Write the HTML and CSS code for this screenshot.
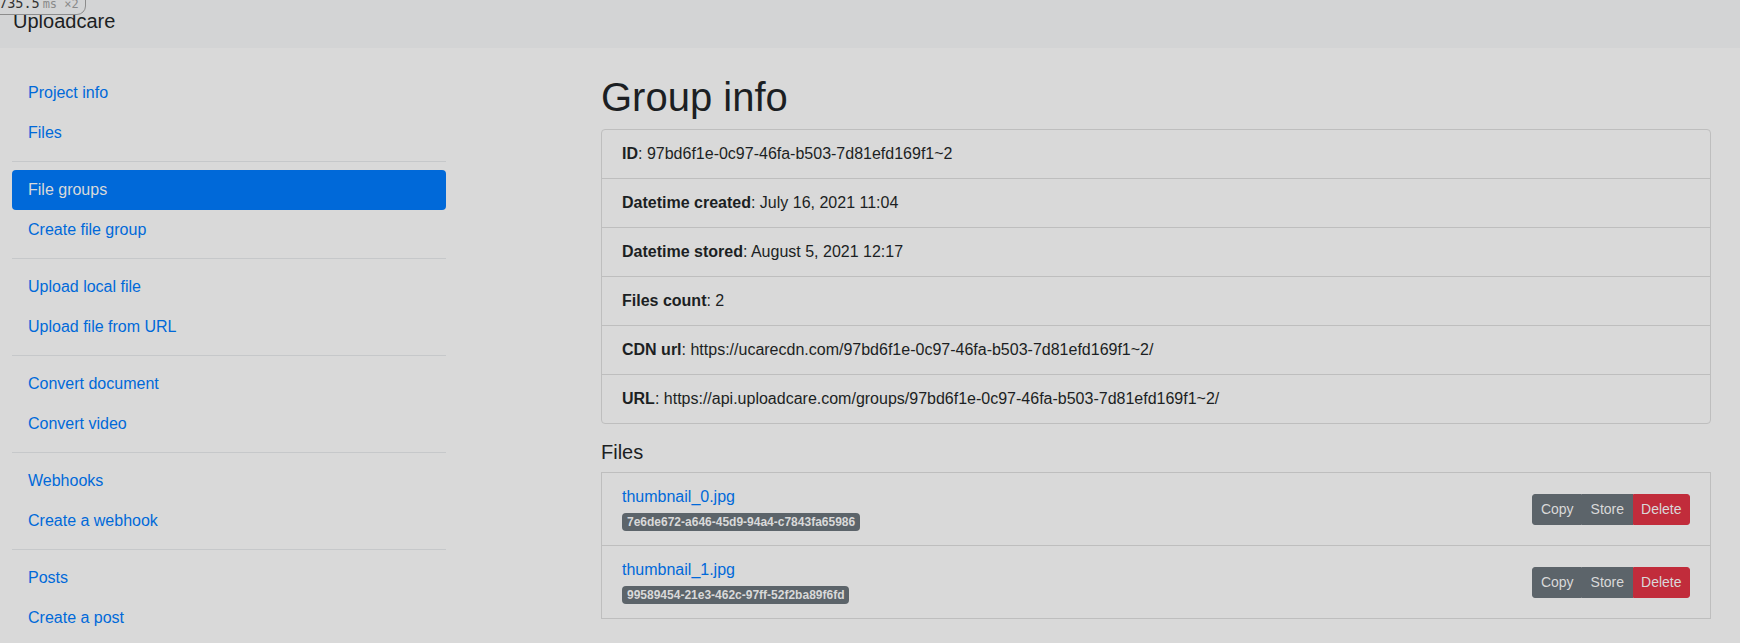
FILE: index.html
```html
<!DOCTYPE html>
<html lang="en">
<head>
<meta charset="utf-8">
<title>Group info</title>
<link rel="stylesheet" href="styles.css">
</head>
<body>
<div class="perf"><span class="perf-num">735.5</span><span class="perf-unit">ms ×2</span></div>
<header class="topbar"><span class="brand">Uploadcare</span></header>
<div class="layout">
  <nav class="sidebar">
    <a class="nav-link" href="#">Project info</a>
    <a class="nav-link" href="#">Files</a>
    <div class="divider"></div>
    <a class="nav-link active" href="#">File groups</a>
    <a class="nav-link" href="#">Create file group</a>
    <div class="divider"></div>
    <a class="nav-link" href="#">Upload local file</a>
    <a class="nav-link" href="#">Upload file from URL</a>
    <div class="divider"></div>
    <a class="nav-link" href="#">Convert document</a>
    <a class="nav-link" href="#">Convert video</a>
    <div class="divider"></div>
    <a class="nav-link" href="#">Webhooks</a>
    <a class="nav-link" href="#">Create a webhook</a>
    <div class="divider"></div>
    <a class="nav-link" href="#">Posts</a>
    <a class="nav-link" href="#">Create a post</a>
  </nav>
  <main class="main">
    <h1 class="title">Group info</h1>
    <ul class="info-list">
      <li class="info-item"><b>ID</b>: 97bd6f1e-0c97-46fa-b503-7d81efd169f1~2</li>
      <li class="info-item"><b>Datetime created</b>: July 16, 2021 11:04</li>
      <li class="info-item"><b>Datetime stored</b>: August 5, 2021 12:17</li>
      <li class="info-item"><b>Files count</b>: 2</li>
      <li class="info-item"><b>CDN url</b>: https://ucarecdn.com/97bd6f1e-0c97-46fa-b503-7d81efd169f1~2/</li>
      <li class="info-item"><b>URL</b>: https://api.uploadcare.com/groups/97bd6f1e-0c97-46fa-b503-7d81efd169f1~2/</li>
    </ul>
    <h5 class="subtitle">Files</h5>
    <ul class="file-list">
      <li class="file-item">
        <div class="file-meta">
          <a class="file-name" href="#">thumbnail_0.jpg</a>
          <div class="file-id"><span class="badge">7e6de672-a646-45d9-94a4-c7843fa65986</span></div>
        </div>
        <div class="btn-group">
          <button class="btn btn-gray">Copy</button><button class="btn btn-gray">Store</button><button class="btn btn-red">Delete</button>
        </div>
      </li>
      <li class="file-item">
        <div class="file-meta">
          <a class="file-name" href="#">thumbnail_1.jpg</a>
          <div class="file-id"><span class="badge">99589454-21e3-462c-97ff-52f2ba89f6fd</span></div>
        </div>
        <div class="btn-group">
          <button class="btn btn-gray">Copy</button><button class="btn btn-gray">Store</button><button class="btn btn-red">Delete</button>
        </div>
      </li>
    </ul>
  </main>
</div>
</body>
</html>
```

FILE: styles.css
```css
* { box-sizing: border-box; }
html, body { margin: 0; padding: 0; }
body {
  background: #d9d9d9;
  color: #1c1f23;
  font-family: "Liberation Sans", Arial, sans-serif;
  font-size: 16px;
  line-height: 24px;
  width: 1740px;
  height: 643px;
  overflow: hidden;
  position: relative;
}
a { text-decoration: none; color: #0069d9; }

.perf {
  position: absolute;
  top: -6px;
  left: -8px;
  padding: 0 6px 2px 6px;
  border: 1px solid #8c8c8c;
  border-radius: 0 0 9px 0;
  background: #d3d4d5;
  font-family: "DejaVu Sans Mono", monospace;
  line-height: 16px;
  white-space: nowrap;
  z-index: 5;
}
.perf-num { font-size: 13.5px; color: #333; }
.perf-unit { font-size: 12px; color: #8a8a8a; margin-left: 3px; }

.topbar {
  height: 48px;
  background: #d3d4d5;
  padding: 6px 13px 0;
}
.brand {
  font-size: 20px;
  line-height: 30px;
  color: #1c1f23;
}

.layout {
  display: flex;
  align-items: flex-start;
}
.sidebar {
  width: 434px;
  margin-left: 12px;
  padding-top: 25px;
  display: flex;
  flex-direction: column;
}
.nav-link {
  display: block;
  padding: 8px 16px;
  line-height: 24px;
  border-radius: 4px;
  color: #0069d9;
}
.nav-link.active {
  background: #0069d9;
  color: #d9d9d9;
}
.divider {
  border-top: 1px solid #c6c8ca;
  margin: 8px 0;
}

.main {
  width: 1110px;
  margin-left: 155px;
  padding-top: 25px;
}
.title {
  margin: 0 0 8px;
  font-size: 40px;
  line-height: 48px;
  font-weight: 500;
}
.info-list, .file-list {
  list-style: none;
  margin: 0;
  padding: 0;
  border: 1px solid #bebebe;
}
.info-list { border-radius: 4px; margin-bottom: 16px; }
.info-item {
  padding: 12px 20px;
  line-height: 24px;
}
.info-item + .info-item { border-top: 1px solid #bebebe; }
.info-item b { font-weight: 700; }

.subtitle {
  margin: 0 0 8px;
  font-size: 20px;
  line-height: 24px;
  font-weight: 500;
}
.file-item {
  display: flex;
  justify-content: space-between;
  align-items: center;
  padding: 12px 20px;
}
.file-item + .file-item { border-top: 1px solid #bebebe; }
.file-name { display: block; line-height: 24px; }
.file-id { line-height: 24px; }
.badge {
  display: inline-block;
  background: #5c646a;
  color: #d9d9d9;
  font-size: 12px;
  font-weight: 700;
  line-height: 12px;
  padding: 3px 5px;
  border-radius: 4px;
  vertical-align: baseline;
}
.btn-group { display: flex; }
.btn {
  font-family: "Liberation Sans", Arial, sans-serif;
  font-size: 14px;
  line-height: 21px;
  padding: 4px 7.5px;
  border: 1px solid transparent;
  color: #d9d9d9;
  margin: 0;
  cursor: pointer;
}
.btn-gray { background: #5c646a; border-color: #5c646a; border-radius: 0; }
.btn-gray:first-child { border-radius: 3px 0 0 3px; }
.btn-red { background: #c12c3b; border-color: #c12c3b; border-radius: 0 3px 3px 0; }
```
